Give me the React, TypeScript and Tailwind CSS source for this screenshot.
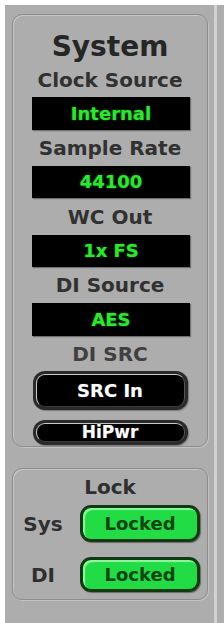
import React from "react";

const font = "font-['DejaVu_Sans',sans-serif]";

function Label({ text, h }: { text: string; h: string }) {
  return (
    <div
      className={`${h} flex items-center justify-center text-[20px] font-bold text-[#313131] leading-none`}
    >
      {text}
    </div>
  );
}

function Display({ value, h }: { value: string; h: string }) {
  return (
    <div
      className={`${h} w-[158px] ml-[2px] bg-black flex items-center justify-center shadow-[1px_1px_1px_#6f6f6f] text-[18px] font-bold text-[#2ae82e] leading-none [text-shadow:0_0_2px_#0a8a10]`}
    >
      {value}
    </div>
  );
}

function PillButton({
  label,
  h,
  size,
}: {
  label: string;
  h: string;
  size: string;
}) {
  return (
    <div
      className={`${h} w-[155px] rounded-[12px] bg-[#2a2a2a] p-[3px] shadow-[1px_1px_1px_#7a7a7a]`}
    >
      <div className="h-full rounded-[9px] bg-black border border-[#c9c9c9] border-b-[#3a3a3a] border-r-[#555] flex items-center justify-center">
        <span
          className={`${size} font-bold text-white leading-none [text-shadow:0_0_2px_#000,0_0_1px_#aaa]`}
        >
          {label}
        </span>
      </div>
    </div>
  );
}

function LockRow({ name, h }: { name: string; h: string }) {
  return (
    <div className={`${h} flex items-center`}>
      <div className="w-[60px] text-center text-[20px] font-bold text-[#2f2f2f] leading-none">
        {name}
      </div>
      <div className="ml-[7px] h-full w-[120px] rounded-[11px] border-[3px] border-[#0f3a12] bg-[#22dc45] shadow-[inset_2px_2px_1px_#8ff5a0,1px_1px_1px_#6a6a6a] flex items-center justify-center">
        <span className="text-[18px] font-bold text-[#0c4412] leading-none">
          Locked
        </span>
      </div>
    </div>
  );
}

export default function App() {
  return (
    <div className={`w-[224px] h-[623px] bg-white pl-[5px] pt-[5px] flex ${font}`}>
      <div className="flex-1 bg-[#adadad] flex">
        <div className="w-[209px] pl-[7px] pr-[6px] pt-[9px] flex flex-col gap-[21px]">
          {/* System panel */}
          <div className="h-[433px] rounded-[10px] border border-[#8c8c8c] shadow-[inset_1px_1px_0_#c6c6c6,1px_1px_0_#c2c2c2] pt-[17px] flex flex-col items-center">
            <div className="h-[30px] flex items-center text-[28px] font-bold text-[#262626] leading-none">
              System
            </div>
            <Label text="Clock Source" h="h-[35px]" />
            <Display value="Internal" h="h-[33px]" />
            <Label text="Sample Rate" h="h-[36px]" />
            <Display value="44100" h="h-[32px]" />
            <Label text="WC Out" h="h-[37px]" />
            <Display value="1x FS" h="h-[32px]" />
            <Label text="DI Source" h="h-[36px]" />
            <Display value="AES" h="h-[33px]" />
            <div className="h-[35px] flex items-center justify-center text-[20px] font-bold text-[#404040] leading-none">
              DI SRC
            </div>
            <PillButton label="SRC In" h="h-[39px]" size="text-[18px]" />
            <div className="h-[10px]" />
            <PillButton label="HiPwr" h="h-[25px]" size="text-[17px]" />
          </div>

          {/* Lock panel */}
          <div className="h-[132px] rounded-[10px] border border-[#8c8c8c] shadow-[inset_1px_1px_0_#c6c6c6,1px_1px_0_#c2c2c2] flex flex-col">
            <div className="h-[36px] flex items-center justify-center text-[20px] font-bold text-[#2f2f2f] leading-none">
              Lock
            </div>
            <LockRow name="Sys" h="h-[37px]" />
            <div className="h-[15px]" />
            <LockRow name="DI" h="h-[35px]" />
          </div>
        </div>
        <div className="w-[3px] bg-[#d2d2d2]" />
        <div className="flex-1" />
      </div>
    </div>
  );
}
